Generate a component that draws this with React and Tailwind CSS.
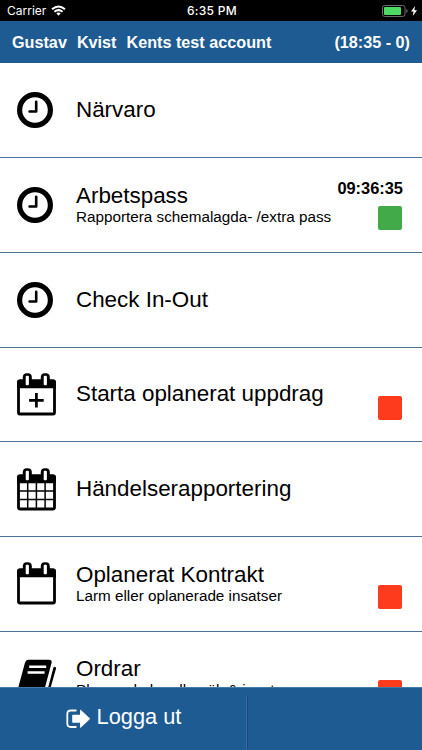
const ClockIcon = () => (
  <svg className="w-9 h-9" viewBox="0 0 36 36" fill="none" stroke="#000">
    <circle cx="18" cy="18" r="15.4" strokeWidth="5.2" />
    <path d="M19.2 9.8v9.7h-6.6" strokeWidth="2.6" strokeLinecap="round" strokeLinejoin="round" />
  </svg>
);

const CalendarIcon = ({ children }) => (
  <svg className="w-10 h-[43px]" viewBox="0 0 40 43">
    <rect x="1.5" y="8" width="36" height="33" rx="1.5" fill="#fff" stroke="#000" strokeWidth="2.8" />
    <path d="M0.1 15.2V9a2.6 2.6 0 0 1 2.6-2.6h33.6A2.6 2.6 0 0 1 38.9 9v6.2z" fill="#000" />
    <rect x="5.8" y="0.3" width="9" height="13" rx="4" fill="#000" />
    <rect x="23.8" y="0.3" width="9" height="13" rx="4" fill="#000" />
    <rect x="8.7" y="2.8" width="3.2" height="9.4" rx="1" fill="#fff" />
    <rect x="26.7" y="2.8" width="3.2" height="9.4" rx="1" fill="#fff" />
    {children}
  </svg>
);

const BookIcon = () => (
  <svg className="w-10 h-10" viewBox="0 -1.5 40 40">
    <path d="M11.5 0.2h20.2q3.6 0 2.9 3.1l-7.1 26.5q-.7 2.5-3.5 2.5H5.5q-1.8 0-1.8 1.3 0 1.5 2.5 1.5h21q2 0 2.6-2L36.3 8.6q.6-1.8 2-1.2 1.1.5.6 2l-7.3 26q-1 3.1-4.3 3.1H5.5Q0 38.5 0 32.6L7.9 3.6Q8.9.2 11.5.2z" fill="#000" />
    <path d="M12.2 7.2h17M10.6 13h17" stroke="#fff" strokeWidth="2.5" />
    <path d="M35.4 7.2L29 30.5" stroke="#fff" strokeWidth="1.2" />
  </svg>
);

const icons = {
  clock: <ClockIcon />,
  plus: (
    <CalendarIcon>
      <path d="M19.4 20v14.6M12.1 27.3h14.6" stroke="#000" strokeWidth="2.7" />
    </CalendarIcon>
  ),
  grid: (
    <CalendarIcon>
      <path d="M10.7 15v26M19.4 15v26M28.1 15v26M2 23h35M2 31.6h35" stroke="#000" strokeWidth="1.5" />
    </CalendarIcon>
  ),
  empty: <CalendarIcon />,
  book: <BookIcon />,
};

const items = [
  { icon: 'clock', title: 'Närvaro' },
  { icon: 'clock', title: 'Arbetspass', text: 'Rapportera schemalagda- /extra pass', time: '09:36:35', color: 'bg-[#43aa49]' },
  { icon: 'clock', title: 'Check In-Out' },
  { icon: 'plus', title: 'Starta oplanerat uppdrag', color: 'bg-[#ff3b1d]' },
  { icon: 'grid', title: 'Händelserapportering' },
  { icon: 'empty', title: 'Oplanerat Kontrakt', text: 'Larm eller oplanerade insatser', color: 'bg-[#ff3b1d]' },
  { icon: 'book', title: 'Ordrar', text: 'Planerade kundbesök & insatser', color: 'bg-[#ff3b1d]' },
];

const MenuItem = ({ item }) => (
  <li className="flex items-center h-[94.7px] shrink-0 pl-[17px] pr-5 border-b border-[#48719c]">
    <div className="w-[59px] shrink-0">{icons[item.icon]}</div>
    <div className="flex-1 whitespace-nowrap">
      <div className="text-[22.4px] leading-6">{item.title}</div>
      {item.text && <div className="text-[15.25px] leading-[18px]">{item.text}</div>}
    </div>
    <div className="flex flex-col items-end w-0 h-full pt-[21px]">
      <div className="h-[19px] -mr-px text-[16.4px] leading-[19px] font-bold">{item.time}</div>
      {item.color && <div className={`w-6 h-6 mt-2 shrink-0 rounded-[2px] ${item.color}`} />}
    </div>
  </li>
);

const StatusBar = () => (
  <div className="grid grid-cols-3 items-center h-[21px] shrink-0 pl-[7px] pr-[5px] bg-black text-white text-[12px] font-['Inter',sans-serif]">
    <div className="flex items-center gap-[5px]">
      Carrier
      <svg className="w-[15px] h-[11px]" viewBox="0 0 15 11" fill="none" stroke="#fff" strokeWidth="2">
        <path d="M1 4.3q6.5-5.6 13 0M3.4 6.8q4.1-3.4 8.2 0" />
        <path d="M5.3 8.3q2.2-1.6 4.4 0L7.5 10.7z" fill="#fff" stroke="none" />
      </svg>
    </div>
    <div className="text-center font-medium tracking-[0.3px]">6:35 PM</div>
    <div className="flex items-center justify-end gap-[3px]">
      <svg className="w-[26px] h-3" viewBox="0 0 26 12">
        <rect x="0.5" y="0.5" width="22.5" height="11" rx="2.3" fill="none" stroke="#6b6b6b" />
        <rect x="2" y="2" width="17" height="8" rx="1" fill="#4cd964" />
        <path d="M24.3 4v4q1.4-.6 1.4-2t-1.4-2z" fill="#6b6b6b" />
      </svg>
      <svg className="w-[6px] h-[10px]" viewBox="0 0 6 10">
        <path d="M4 0L0 5.6h2.5L1.8 10 6 4.2H3.4z" fill="#fff" />
      </svg>
    </div>
  </div>
);

const App = () => {
  return (
    <div className="flex flex-col w-full h-[750px] overflow-hidden bg-white text-black font-['Liberation_Sans',Arial,sans-serif]">
      <StatusBar />
      <header className="flex items-center justify-between h-[41.5px] shrink-0 px-3 bg-[#1d5b92] text-white text-[16.2px] font-bold whitespace-nowrap">
        <div className="flex gap-[10px]">
          <span>Gustav</span>
          <span>Kvist</span>
          <span>Kents test account</span>
        </div>
        <span>(18:35 - 0)</span>
      </header>
      <ul className="flex flex-col flex-1 min-h-0 pt-px overflow-hidden">
        {items.map((item) => (
          <MenuItem key={item.title} item={item} />
        ))}
      </ul>
      <footer className="flex h-[63px] shrink-0 bg-[#1d5b92] text-white border-t border-[#467aa6]">
        <button className="flex items-start justify-center gap-[7px] w-[246px] pl-px pt-4 text-[21.8px] leading-[26px]">
          <svg className="w-6 h-5 mt-[5px]" viewBox="0 0 24 20">
            <path d="M9.8 1.5H5Q1.3 1.5 1.3 5v9.5Q1.3 18 5 18h4.8" fill="none" stroke="#fff" strokeWidth="1.8" strokeLinecap="round" />
            <path d="M14 1.3q0-1 .9-.3l8.6 8q.7.7 0 1.4l-8.6 8q-.9.6-.9-.4v-4.3H7q-.8 0-.8-.8V6.5q0-.8.8-.8h7z" fill="#fff" />
          </svg>
          Logga ut
        </button>
        <div className="w-[2px] mt-2 border-l border-r border-l-[#3a70a1] border-r-[#164a79]" />
      </footer>
    </div>
  );
};

export default App;
